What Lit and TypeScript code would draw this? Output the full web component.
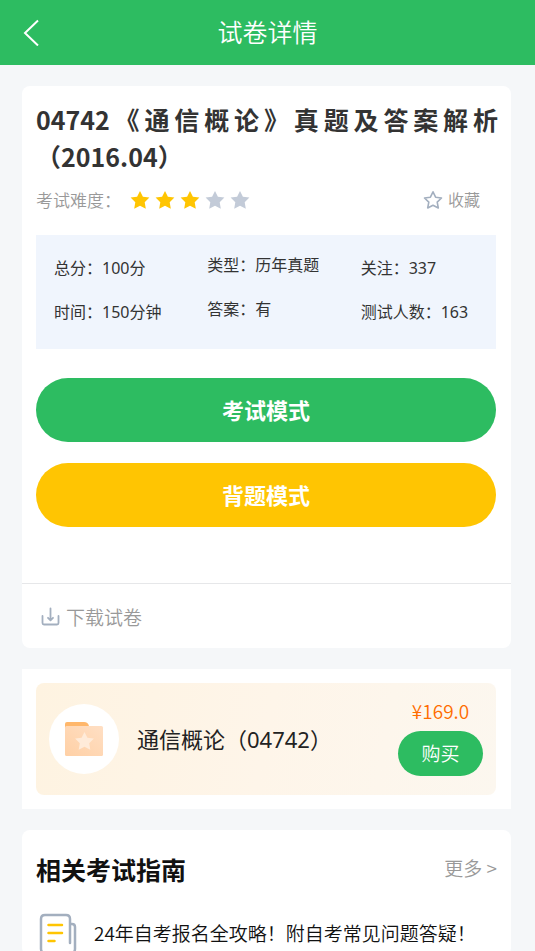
import { LitElement, html, css } from "lit";
import { customElement } from "lit/decorators.js";
import { classMap } from "lit/directives/class-map.js";

const STAR = "M10 1 L12.9 6.700 L19.400 7.600 L14.700 12.200 L15.800 18.800 L10 15.700 L4.200 18.800 L5.300 12.200 L0.600 7.600 L7.100 6.700 Z";

@customElement("app-root")
export class AppRoot extends LitElement {
  static styles = css`
    :host {
      display: block;
      min-height: 100vh;
      background: #f5f7f9;
      color: #333;
      font-family: "Noto Sans CJK SC", sans-serif;
      font-size: 19px;
      font-weight: 350;
    }
    * { box-sizing: border-box; }
    h1, h2, p, ul, dl, dd { margin: 0; padding: 0; }
    svg { display: block; flex: none; }
    button {
      border: 0;
      padding: 0;
      background: none;
      font: inherit;
      color: inherit;
      cursor: pointer;
    }
    a { color: inherit; text-decoration: none; }

    .bar {
      display: grid;
      grid-template-columns: 64px 1fr 64px;
      align-items: center;
      height: 65px;
      background: #2dbc61;
      color: #fff;
    }
    .back { display: flex; padding-left: 23px; }
    .bar-title {
      padding-bottom: 4px;
      font-size: 25px;
      font-weight: 350;
      line-height: 36px;
      text-align: center;
    }

    main {
      display: flex;
      flex-direction: column;
      gap: 21px;
      padding: 21px 24px 0 22px;
    }
    .card { background: #fff; border-radius: 8px; }

    .paper { padding: 15px 15px 0 14px; }
    .paper-title {
      font-size: 25px;
      font-weight: 700;
      line-height: 37px;
      text-align: justify;
      margin-right: -2px;
    }
    .rating {
      display: flex;
      align-items: center;
      margin-top: 12px;
      height: 26px;
      font-size: 17px;
      color: #999;
    }
    .stars { display: flex; gap: 5px; margin-left: 9px; }
    .star { fill: #c3cbd8; }
    .star.on { fill: #ffc502; }
    .rating-label, .fav-label { padding-bottom: 2px; }
    .fav {
      display: flex;
      align-items: center;
      gap: 5px;
      margin-left: auto;
      margin-right: 16px;
      font-size: 16px;
    }

    .facts {
      display: grid;
      grid-template-columns: repeat(3, 1fr);
      margin-top: 22px;
      padding: 18px 0 22px;
      background: #f0f5fd;
      font-family: "Noto Sans", "Noto Sans CJK SC", sans-serif;
      font-size: 16px;
      font-weight: 400;
      line-height: 30px;
    }
    .col {
      display: flex;
      flex-direction: column;
      gap: 14px;
      padding-left: 18px;
    }
    .col.raised { margin-top: -3px; }
    .fact { display: flex; white-space: nowrap; }

    .modes {
      display: flex;
      flex-direction: column;
      gap: 21px;
      margin-top: 29px;
    }
    .mode {
      height: 64px;
      padding-bottom: 2px;
      border-radius: 32px;
      color: #fff;
      font-size: 22px;
      font-weight: 700;
    }
    .exam { background: #2dbc61; }
    .recite { background: #ffc502; }

    .download {
      display: flex;
      align-items: center;
      gap: 6px;
      margin: 56px -15px 0 -14px;
      padding-left: 19px;
      height: 65px;
      border-top: 1px solid #e6e7e9;
      color: #999;
    }

    .course { padding: 14px 15px 14px 14px; border-radius: 0; }
    .offer {
      display: flex;
      align-items: center;
      padding: 0 13px;
      height: 112px;
      border-radius: 8px;
      background: linear-gradient(100deg, #fef3e1, #fef5e9 50%, #fcf7ef);
    }
    .disc {
      display: grid;
      place-items: center;
      width: 70px;
      height: 70px;
      border-radius: 50%;
      background: #fff;
    }
    .course-name {
      flex: 1;
      margin-left: 18px;
      padding-bottom: 2px;
      font-family: "Noto Sans", "Noto Sans CJK SC", sans-serif;
      font-size: 22px;
      font-weight: 400;
      color: #222;
    }
    .purchase {
      display: flex;
      flex-direction: column;
      align-items: center;
      gap: 6px;
      padding-bottom: 5px;
    }
    .price { line-height: 28px; color: #ff6d00; }
    .buy {
      width: 85px;
      height: 45px;
      padding-bottom: 2px;
      border-radius: 23px;
      background: #2dbc61;
      color: #fff;
    }

    .guide { padding: 20px 14px 0; overflow: hidden; }
    .guide-head {
      display: flex;
      align-items: center;
      justify-content: space-between;
      height: 37px;
    }
    .guide-title { font-size: 25px; font-weight: 700; color: #111; }
    .more { padding-bottom: 2px; color: #999; }
    .article {
      display: flex;
      align-items: center;
      gap: 17px;
      margin-top: 24px;
      padding-left: 3px;
      height: 45px;
      color: #111;
    }
    .article-title { padding-bottom: 2px; white-space: nowrap; }
  `;

  private facts = [
    [["总分", "100分"], ["时间", "150分钟"]],
    [["类型", "历年真题"], ["答案", "有"]],
    [["关注", "337"], ["测试人数", "163"]],
  ];

  private star(on: boolean) {
    return html`<svg class=${classMap({ star: true, on })} width="20" height="20" viewBox="0 0 20 20"><path d=${STAR}></path></svg>`;
  }

  render() {
    return html`
      <header class="bar">
        <button class="back" aria-label="返回">
          <svg width="17" height="27" viewBox="0 0 17 27" fill="none" stroke="#fff" stroke-width="2"><path d="M15 1.500 L2 14 L15 26.500"></path></svg>
        </button>
        <h1 class="bar-title">试卷详情</h1>
      </header>
      <main>
        <section class="card paper">
          <h2 class="paper-title">04742《通信概论》真题及答案解析（2016.04）</h2>
          <div class="rating">
            <span class="rating-label">考试难度：</span>
            <span class="stars" role="img" aria-label="3 / 5">${[1, 2, 3, 4, 5].map((n) => this.star(n <= 3))}</span>
            <button class="fav">
              <svg width="20" height="20" viewBox="0 0 20 20" fill="none" stroke="#a3afbf" stroke-width="1.600" stroke-linejoin="round"><path d="M10 1.800 L12.600 7.200 L18.500 8 L14.200 12.100 L15.300 18 L10 15.200 L4.700 18 L5.800 12.100 L1.500 8 L7.400 7.200 Z"></path></svg>
              <span class="fav-label">收藏</span>
            </button>
          </div>
          <div class="facts">
            ${this.facts.map((col, i) => html`
              <dl class=${classMap({ col: true, raised: i === 1 })}>
                ${col.map(([k, v]) => html`<div class="fact"><dt>${k}：</dt><dd>${v}</dd></div>`)}
              </dl>`)}
          </div>
          <div class="modes">
            <button class="mode exam">考试模式</button>
            <button class="mode recite">背题模式</button>
          </div>
          <a class="download" href="#download">
            <svg width="19" height="19" viewBox="0 0 19 19" fill="none" stroke="#a3afbf" stroke-width="1.800" stroke-linecap="round" stroke-linejoin="round"><path d="M1.500 9 V16 Q1.500 17.500 3 17.500 H16 Q17.500 17.500 17.500 16 V9 M9.500 1.500 V13 M7 10.800 L9.500 13.300 L12 10.800"></path></svg>
            下载试卷
          </a>
        </section>

        <section class="card course">
          <div class="offer">
            <div class="disc">
              <svg width="40" height="36" viewBox="0 0 40 36">
                <defs><linearGradient id="folder" x1="0" y1="1" x2="1" y2="0"><stop offset="0" stop-color="#ffd0a5"></stop><stop offset="1" stop-color="#ffdfc4"></stop></linearGradient></defs>
                <path d="M1 8 V3 Q1 1 3 1 H20 Q24 1 25 5 V8 Z" fill="#ffb76b"></path>
                <rect x="1" y="5" width="38" height="30" rx="1.500" fill="url(#folder)"></rect>
                <path transform="translate(10.500 10)" d=${STAR} fill="#ffebd9"></path>
              </svg>
            </div>
            <p class="course-name">通信概论（04742）</p>
            <div class="purchase">
              <span class="price">¥169.0</span>
              <button class="buy">购买</button>
            </div>
          </div>
        </section>

        <section class="card guide">
          <div class="guide-head">
            <h2 class="guide-title">相关考试指南</h2>
            <a class="more" href="#more">更多 &gt;</a>
          </div>
          <a class="article" href="#article">
            <svg width="38" height="42" viewBox="0 0 38 42" fill="none" stroke="#a3afbf" stroke-width="2.500" stroke-linecap="round">
              <path d="M31 30 V6 Q31 2 27 2 H6 Q2 2 2 6 V36 Q2 40 6 40 H32 Q36 40 36 36 V14 Q36 11 33 11 H31"></path>
              <path d="M9.500 12 H23 M9.500 20 H23 M9.500 28 H15.500" stroke="#ffc502"></path>
            </svg>
            <span class="article-title">24年自考报名全攻略！附自考常见问题答疑！</span>
          </a>
        </section>
      </main>
    `;
  }
}
